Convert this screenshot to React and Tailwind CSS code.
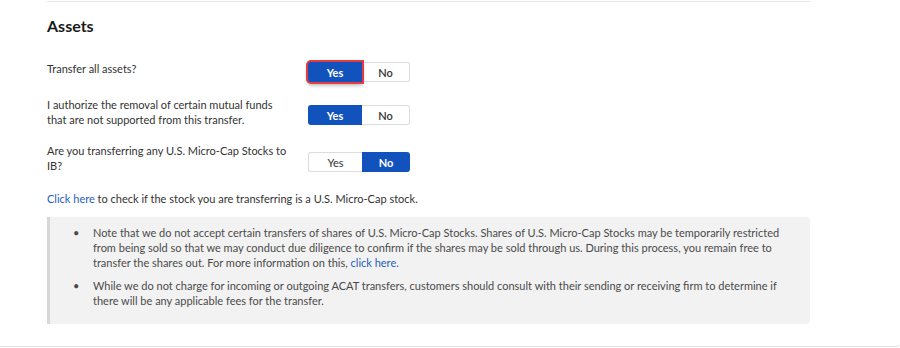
import { useState } from "react";

const BLUE = "bg-[#1152bd]";

function YesNo({ value, onChange, highlight }) {
    return (
        <div className="flex h-[20px] w-[102px] rounded-[3px] text-[11px]">
            <button
                onClick={() => onChange("yes")}
                className={
                    "w-[54px] h-full rounded-l-[3px] " +
                    (value === "yes"
                        ? BLUE + " text-white font-bold"
                        : "bg-white text-[#333] border border-r-0 border-[#dcdcdc]") +
                    (highlight ? " ring-2 ring-[#e53b3f] shadow-[0_3px_4px_rgba(0,0,0,0.35)] relative z-10" : "")
                }
            >
                Yes
            </button>
            <button
                onClick={() => onChange("no")}
                className={
                    "w-[48px] h-full rounded-r-[3px] " +
                    (value === "no"
                        ? BLUE + " text-white font-bold"
                        : "bg-white text-[#333] font-semibold border border-l-0 border-[#dcdcdc]")
                }
            >
                No
            </button>
        </div>
    );
}

export default function App() {
    const [allAssets, setAllAssets] = useState("yes");
    const [authorize, setAuthorize] = useState("yes");
    const [microCap, setMicroCap] = useState("no");

    return (
        <div className="w-[900px] h-[348px] bg-white overflow-hidden font-['Lato',sans-serif]">
            <div className="h-[347px] border-b border-[#e1e1e1] rounded-br-[4px]">
                <div className="ml-[47px] w-[763px] pt-px">
                    <div className="border-t border-[#e6e6e6]"></div>

                    <h2 className="mt-[14px] text-[16px] leading-[20px] font-bold text-[#1a1a1a]">Assets</h2>

                    <div className="mt-[26px] flex items-start text-[11px] leading-[15px] text-[#333]">
                        <div className="w-[261px] -mt-[1px]">Transfer all assets?</div>
                        <YesNo value={allAssets} onChange={setAllAssets} highlight />
                    </div>

                    <div className="mt-[15px] flex items-start text-[11px] leading-[15px] text-[#333]">
                        <div className="w-[261px] pr-[16px]">
                            I authorize the removal of certain mutual funds that are not supported from this transfer.
                        </div>
                        <div className="mt-[8px]">
                            <YesNo value={authorize} onChange={setAuthorize} />
                        </div>
                    </div>

                    <div className="mt-[16px] flex items-start text-[11px] leading-[15px] text-[#333]">
                        <div className="w-[261px] pr-[16px]">
                            Are you transferring any U.S. Micro-Cap Stocks to IB?
                        </div>
                        <div className="mt-[9px]">
                            <YesNo value={microCap} onChange={setMicroCap} />
                        </div>
                    </div>

                    <p className="mt-[18px] text-[11px] leading-[15px] text-[#333]">
                        <a href="#" className="text-[#1f5fbf]">Click here</a> to check if the stock you are transferring is a U.S. Micro-Cap stock.
                    </p>

                    <div className="mt-[11px] h-[107px] bg-[#f2f2f2] border-l-[3px] border-[#d8d8d8] rounded-r-[4px] pt-[8px] pr-[28px] text-[11px] leading-[15px] text-[#4a4a4a]">
                        <div className="flex">
                            <span className="w-[43px] pl-[23px]">•</span>
                            <p className="flex-1">
                                Note that we do not accept certain transfers of shares of U.S. Micro-Cap Stocks. Shares of U.S. Micro-Cap Stocks may be temporarily restricted from being sold so that we may conduct due diligence to confirm if the shares may be sold through us. During this process, you remain free to transfer the shares out. For more information on this, <a href="#" className="text-[#1f5fbf]">click here.</a>
                            </p>
                        </div>
                        <div className="mt-[8px] flex">
                            <span className="w-[43px] pl-[23px]">•</span>
                            <p className="flex-1">
                                While we do not charge for incoming or outgoing ACAT transfers, customers should consult with their sending or receiving firm to determine if there will be any applicable fees for the transfer.
                            </p>
                        </div>
                    </div>
                </div>
            </div>
        </div>
    );
}
